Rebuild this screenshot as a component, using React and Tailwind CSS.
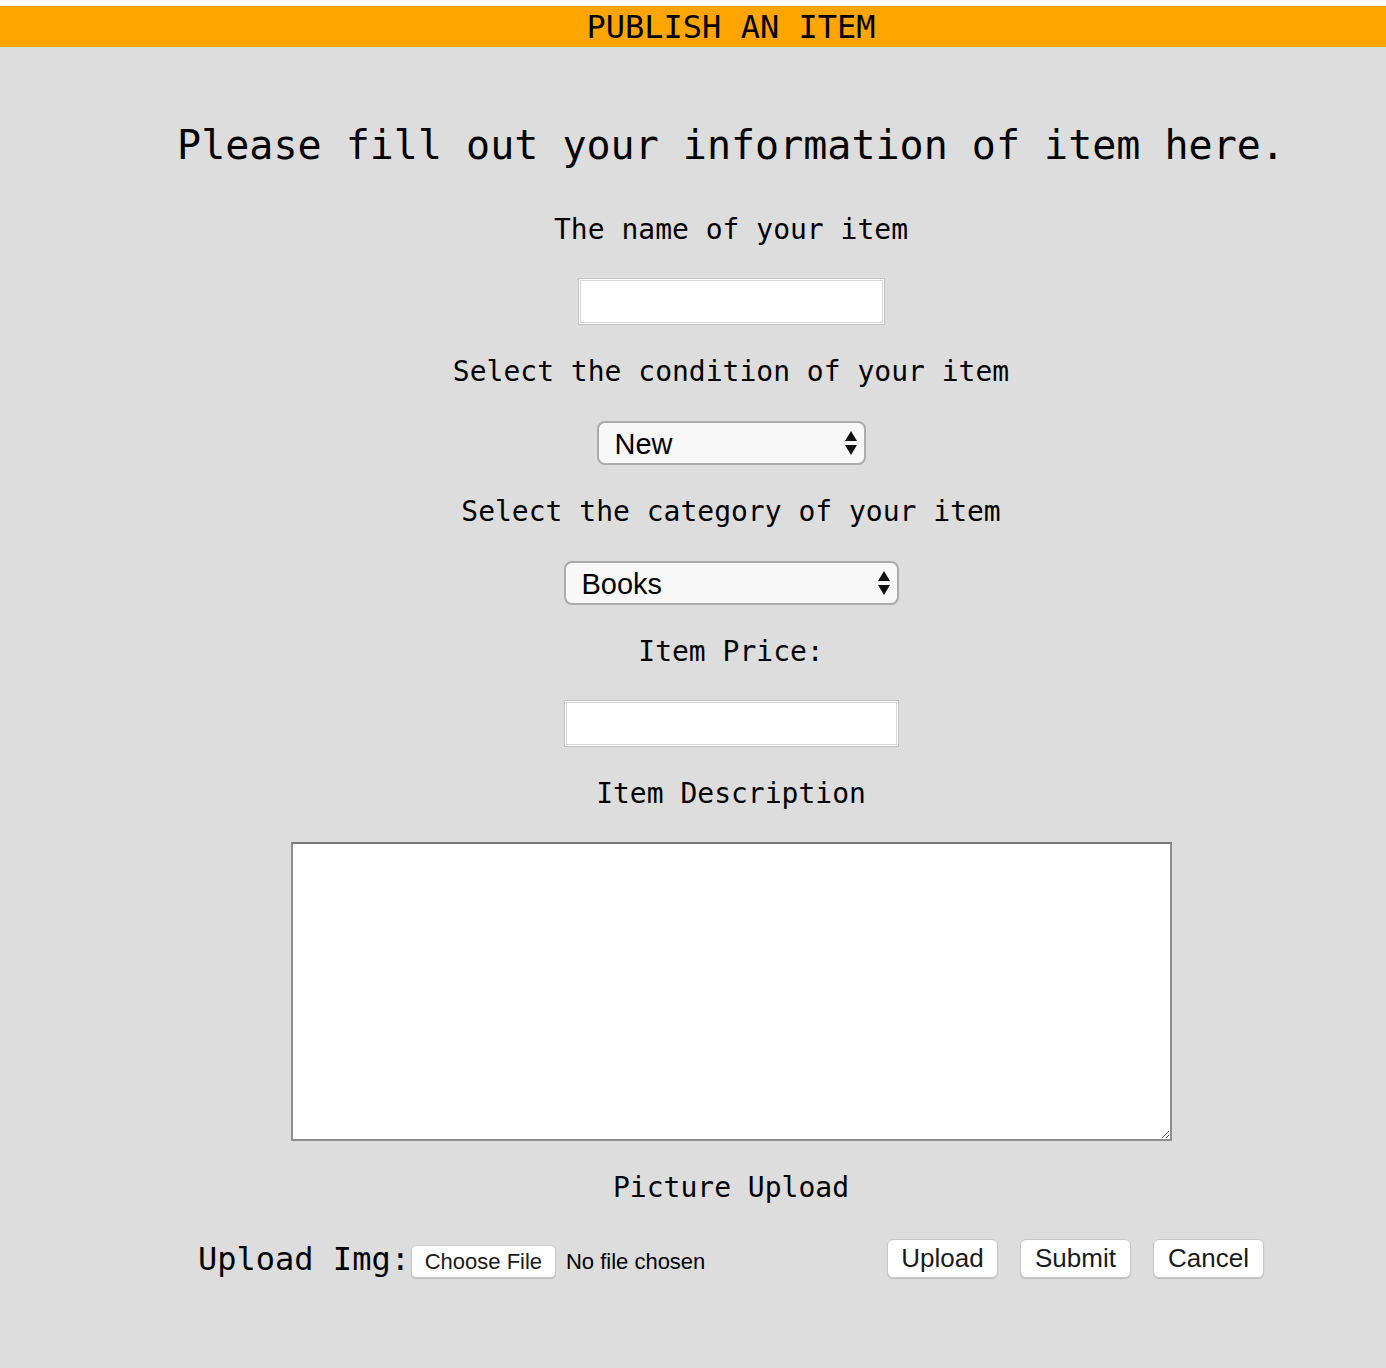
import React from "react";

const mono = { fontFamily: '"DejaVu Sans Mono", "Liberation Mono", monospace' };
const sans = { fontFamily: '"Liberation Sans", Arial, sans-serif' };

function Label({ children, mt }) {
  return (
    <div className={`h-8 flex items-center justify-center text-[28px] text-black ${mt}`} style={mono}>
      {children}
    </div>
  );
}

function Arrows() {
  return (
    <svg className="pointer-events-none absolute right-[8px] top-1/2 -translate-y-1/2" width="14" height="30" viewBox="0 0 14 30">
      <polygon points="7,3 13,13 1,13" fill="#111" />
      <polygon points="1,17 13,17 7,27" fill="#111" />
    </svg>
  );
}

function Select({ width, value, options }) {
  return (
    <div className="relative" style={{ width }}>
      <select
        defaultValue={value}
        className="appearance-none w-full h-[44px] rounded-[8px] border-2 border-[#ababab] bg-[#f8f8f8] pl-[16px] text-[29px] text-black outline-none"
        style={sans}
      >
        {options.map((o) => (
          <option key={o}>{o}</option>
        ))}
      </select>
      <Arrows />
    </div>
  );
}

function TextInput({ width }) {
  return (
    <input
      type="text"
      className="h-[47px] bg-white border border-[#c4c4c4] shadow-[inset_0_0_0_1px_#ffffff,inset_0_0_0_2px_#d6d6d6] outline-none"
      style={{ width }}
    />
  );
}

function Btn({ children }) {
  return (
    <button
      className="h-[39px] w-[111px] rounded-[6px] bg-white border border-[#c8c8c8] shadow-[0_1px_1px_rgba(0,0,0,0.15)] text-[26px] text-[#1a1a1a] flex items-center justify-center pb-[1px]"
      style={sans}
    >
      {children}
    </button>
  );
}

export default function App() {
  return (
    <div className="bg-white pt-[6px] w-[1386px] min-h-screen">
      <div className="h-[41px] bg-[#ffa500] flex items-center justify-center pl-[76px]">
        <span className="text-[32px] leading-none text-black" style={mono}>
          PUBLISH AN ITEM
        </span>
      </div>
      <div className="bg-[#dddddd] min-h-[1321px] pl-[76px] flex flex-col items-center">
        <h1 className="mt-[74px] h-[48px] flex items-center text-[40px] text-black font-normal" style={mono}>
          Please fill out your information of item here.
        </h1>
        <Label mt="mt-[45px]">The name of your item</Label>
        <div className="mt-[32px]">
          <TextInput width={307} />
        </div>
        <Label mt="mt-[31px]">Select the condition of your item</Label>
        <div className="mt-[33px]">
          <Select width={269} value="New" options={["New", "Like New", "Used", "Poor"]} />
        </div>
        <Label mt="mt-[31px]">Select the category of your item</Label>
        <div className="mt-[33px]">
          <Select width={335} value="Books" options={["Books", "Electronics", "Furniture", "Clothing", "Other"]} />
        </div>
        <Label mt="mt-[31px]">Item Price:</Label>
        <div className="mt-[32px]">
          <TextInput width={335} />
        </div>
        <Label mt="mt-[31px]">Item Description</Label>
        <textarea
          className="mt-[32px] w-[881px] h-[299px] bg-white border-2 border-[#8e8e8e] border-t-[#777777] outline-none"
        />
        <Label mt="mt-[31px]">Picture Upload</Label>
        <div className="mt-[35px] w-[1066px] h-[39px] flex items-center justify-between">
          <div className="flex items-center">
            <span className="text-[32px] text-black leading-none" style={mono}>
              Upload Img:
            </span>
            <button
              className="ml-[1px] mt-[5px] h-[33px] w-[145px] rounded-[5px] bg-white border border-[#c8c8c8] shadow-[0_1px_1px_rgba(0,0,0,0.15)] text-[22px] text-[#1a1a1a] flex items-center justify-center"
              style={sans}
            >
              Choose File
            </button>
            <span className="ml-[10px] mt-[5px] text-[22px] text-black" style={sans}>
              No file chosen
            </span>
          </div>
          <div className="flex items-center gap-[22px]">
            <Btn>Upload</Btn>
            <Btn>Submit</Btn>
            <Btn>Cancel</Btn>
          </div>
        </div>
      </div>
    </div>
  );
}
